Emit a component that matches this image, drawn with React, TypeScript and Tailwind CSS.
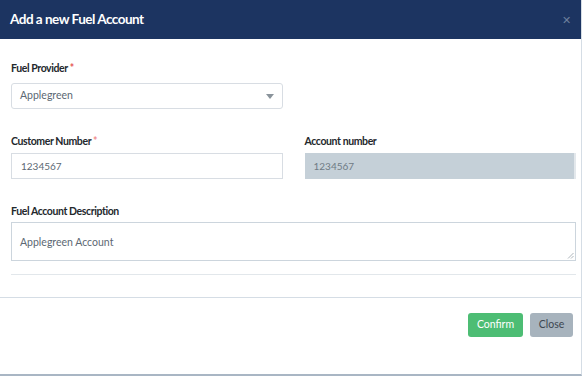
import React from "react";

export default function App() {
  return (
    <div className="w-[587px] h-[376px] bg-white" style={{ fontFamily: 'Lato, "Open Sans", sans-serif' }}>
      <div className="w-[582px] h-[376px] flex flex-col border-r border-[#d5dde5] border-b-2 border-b-[#a9b6c4]">
        <div className="h-[39px] bg-[#1c3461] flex items-center justify-between pl-[10px] pr-[10px] shrink-0">
          <span className="text-white font-bold text-[13.5px] tracking-[-0.5px]">Add a new Fuel Account</span>
          <span className="text-[#6d7f9c] text-[11px] leading-none">✕</span>
        </div>
        <div className="pl-[11px] pr-[5px] pt-[22px] flex flex-col">
          <div className="text-[10.5px] font-bold text-[#23282c] tracking-[-0.4px] h-[14px] leading-[14px]">
            Fuel Provider <span className="text-[#e55353]">*</span>
          </div>
          <div className="mt-[8px] w-[272px] h-[26px] border border-[#d8dde3] rounded-[3px] flex items-center justify-between pl-[8px] pr-[8px]">
            <span className="text-[10.5px] text-[#5c6873]">Applegreen</span>
            <svg width="8" height="5" viewBox="0 0 8 5"><path d="M0 0 L8 0 L4 5 Z" fill="#8a939b" /></svg>
          </div>
          <div className="mt-[25px] grid grid-cols-2 gap-x-[22px]">
            <div className="flex flex-col">
              <div className="text-[10.5px] font-bold text-[#23282c] tracking-[-0.4px] h-[14px] leading-[14px]">
                Customer Number <span className="text-[#f08c8c]">*</span>
              </div>
              <div className="mt-[5px] h-[26px] border border-[#d8dde3] flex items-center pl-[9px]">
                <span className="text-[10px] text-[#5c6873]">1234567</span>
              </div>
            </div>
            <div className="flex flex-col">
              <div className="text-[10.5px] font-bold text-[#23282c] tracking-[-0.4px] h-[14px] leading-[14px]">
                Account number
              </div>
              <div className="mt-[5px] h-[26px] bg-[#c5d0d8] border-r-2 border-[#e3e8ec] flex items-center pl-[9px]">
                <span className="text-[10px] text-[#6f7b85]">1234567</span>
              </div>
            </div>
          </div>
          <div className="mt-[25px] text-[10.5px] font-bold text-[#23282c] tracking-[-0.4px] h-[14px] leading-[14px]">
            Fuel Account Description
          </div>
          <div className="mt-[4px] h-[39px] border border-[#ccd5dd] relative pl-[8px] pt-[5px]">
            <span className="text-[10.5px] text-[#5c6873]">Applegreen Account</span>
            <svg className="absolute right-[1px] bottom-[1px]" width="7" height="7" viewBox="0 0 7 7">
              <path d="M6.5 1 L1 6.5 M6.5 4 L4 6.5" stroke="#9aa3ab" strokeWidth="0.8" />
            </svg>
          </div>
          <div className="mt-[13px] h-px bg-[#e2e7eb]" />
        </div>
        <div className="mt-[22px] border-t border-[#d5dde5] flex justify-end gap-[7px] pt-[15px] pr-[8px]">
          <button className="h-[24px] w-[55px] rounded-[3px] bg-[#4dbd74] text-white text-[10.5px]">Confirm</button>
          <button className="h-[24px] w-[43px] rounded-[3px] bg-[#a7b3bd] text-[#3c4650] text-[10.5px]">Close</button>
        </div>
      </div>
    </div>
  );
}
